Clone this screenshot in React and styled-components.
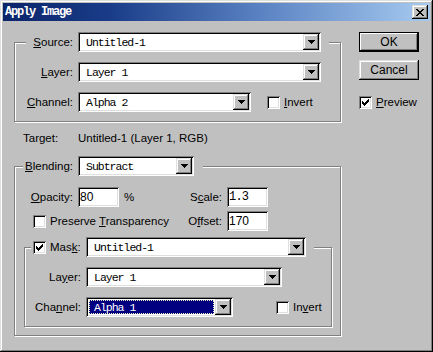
import React from "react";
import styled, { createGlobalStyle } from "styled-components";

const GlobalStyle = createGlobalStyle`
  html, body { margin: 0; padding: 0; background: #c0c0c0; }
  * { box-sizing: border-box; }
`;

const raised =
   "inset -1px -1px #000, inset 1px 1px #dfdfdf, inset -2px -2px #808080, inset 2px 2px #fff";
const sunken =
   "inset 1px 1px #808080, inset -1px -1px #fff, inset 2px 2px #000, inset -2px -2px #dfdfdf";

const Window = styled.div`
   width: 433px;
   height: 352px;
   padding: 3px;
   background: #c0c0c0;
   box-shadow: ${raised};
   font-family: "Liberation Sans", Arial, sans-serif;
   font-size: 11.5px;
   color: #000;
`;
const TitleBar = styled.div`
   height: 18px;
   display: flex;
   align-items: center;
   justify-content: space-between;
   padding: 0 2px;
   background: linear-gradient(90deg, #0a246a 0%, #1a3c88 25%, #5a82c2 60%, #a6caf0 100%);
`;
const Title = styled.span`
   color: #fff;
   font-family: "Liberation Mono", monospace;
   font-weight: bold;
   font-size: 12px;
   letter-spacing: -1.2px;
`;
const CloseButton = styled.div`
   width: 16px;
   height: 14px;
   background: #c0c0c0;
   box-shadow: ${raised};
   display: flex;
   align-items: center;
   justify-content: center;
`;
const Body = styled.div`
   display: flex;
   padding: 11px 0 0 11px;
`;
const LeftColumn = styled.div`
   width: 328px;
   display: flex;
   flex-direction: column;
`;
const RightColumn = styled.div`
   margin-left: 17px;
   width: 60px;
   display: flex;
   flex-direction: column;
`;
const Group = styled.fieldset`
   margin: ${(p) => p.$mt || 0}px ${(p) => p.$mr ?? 1}px 0 ${(p) => p.$ml || 0}px;
   padding: 0 0 ${(p) => p.$pb}px 0;
   min-width: 0;
   border: 1px solid #808080;
   box-shadow: inset 1px 1px #fff, 1px 1px #fff;
`;
const Legend = styled.legend`
   margin-left: ${(p) => p.$offset}px;
   padding: 0 ${(p) => p.$pr}px 0 ${(p) => p.$pl || 0}px;
   background: #c0c0c0;
`;
const LegendInner = styled.div`
   display: flex;
   align-items: center;
   height: 20px;
`;
const Row = styled.div`
   display: flex;
   align-items: center;
   height: 20px;
   margin-top: ${(p) => p.$mt ?? 10}px;
`;
const Cell = styled.div`
   display: flex;
   align-items: center;
   width: ${(p) => p.$w}px;
   flex-shrink: 0;
`;
const Label = styled.span`
   width: ${(p) => p.$w}px;
   flex-shrink: 0;
   margin-right: 5px;
   text-align: ${(p) => p.$align || "right"};
   white-space: nowrap;
   margin-left: ${(p) => p.$ml || 0}px;
   u { text-underline-offset: 1px; }
`;
const Text = styled.span`
   margin-left: ${(p) => p.$ml || 0}px;
   white-space: nowrap;
   u { text-underline-offset: 1px; }
`;
const Combo = styled.div`
   width: ${(p) => p.$w}px;
   height: 20px;
   flex-shrink: 0;
   display: flex;
   padding: 2px;
   background: #fff;
   box-shadow: ${sunken};
`;
const ComboText = styled.div`
   flex: 1;
   display: flex;
   align-items: center;
   margin: 1px;
   padding-left: 5px;
   font-family: "Liberation Mono", monospace;
   font-size: 11.5px;
   letter-spacing: -1px;
   background: ${(p) => (p.$selected ? "#000080" : "transparent")};
   color: ${(p) => (p.$selected ? "#fff" : "#000")};
   outline: ${(p) => (p.$selected ? "1px dotted #f0f0c0" : "none")};
   outline-offset: -1px;
`;
const DropButton = styled.div`
   width: 16px;
   height: 16px;
   flex-shrink: 0;
   background: #c0c0c0;
   box-shadow: ${raised};
   display: flex;
   align-items: center;
   justify-content: center;
`;
const Input = styled.div`
   width: 41px;
   height: 20px;
   flex-shrink: 0;
   display: flex;
   align-items: center;
   padding-left: 2px;
   background: #fff;
   box-shadow: ${sunken};
   font-family: ${(p) => (p.$mono ? '"Liberation Mono", monospace' : '"Liberation Sans", Arial, sans-serif')};
   font-size: 12px;
   letter-spacing: ${(p) => (p.$mono ? "-0.8px" : "0")};
`;
const Box = styled.span`
   width: 13px;
   height: 13px;
   flex-shrink: 0;
   margin-left: ${(p) => p.$ml || 0}px;
   background: #fff;
   box-shadow: ${sunken};
   display: flex;
   align-items: center;
   justify-content: center;
`;
const TargetRow = styled.div`
   display: flex;
   margin-top: 10px;
   line-height: 13px;
   height: 13px;
`;
const TargetLabel = styled.span`
   width: 64px;
   padding-left: 9px;
`;
const Button = styled.div`
   width: 60px;
   height: 20px;
   display: flex;
   align-items: center;
   justify-content: center;
   margin-bottom: 8px;
   background: #c0c0c0;
   font-size: 12px;
   border: ${(p) => (p.$default ? "1px solid #000" : "none")};
   box-shadow: ${(p) =>
      p.$default
         ? "inset -1px -1px #000, inset 1px 1px #fff, inset -2px -2px #808080"
         : raised};
`;
const PreviewRow = styled.div`
   display: flex;
   align-items: center;
   height: 20px;
   margin-top: 4px;
`;

const Arrow = () => (
   <svg width="7" height="4" shapeRendering="crispEdges">
      <rect x="0" y="0" width="7" height="1" fill="#000" />
      <rect x="1" y="1" width="5" height="1" fill="#000" />
      <rect x="2" y="2" width="3" height="1" fill="#000" />
      <rect x="3" y="3" width="1" height="1" fill="#000" />
   </svg>
);

const CloseX = () => (
   <svg width="8" height="7" shapeRendering="crispEdges">
      {[0, 1, 2, 3, 4, 5, 6].map((i) => (
         <g key={i}>
            <rect x={i} y={i} width="2" height="1" fill="#000" />
            <rect x={6 - i} y={i} width="2" height="1" fill="#000" />
         </g>
      ))}
   </svg>
);

const checkRows = [
   [6, 1],
   [5, 2],
   [0, 1, 4, 3],
   [0, 2, 3, 3],
   [0, 5],
   [1, 3],
   [2, 1],
];
const Tick = () => (
   <svg width="7" height="7" shapeRendering="crispEdges">
      {checkRows.map((r, y) => {
         const out = [];
         for (let k = 0; k < r.length; k += 2)
            out.push(<rect key={k} x={r[k]} y={y} width={r[k + 1]} height="1" fill="#000" />);
         return <g key={y}>{out}</g>;
      })}
   </svg>
);

const ComboBox = ({ w, value, selected }) => (
   <Combo $w={w}>
      <ComboText $selected={selected}>{value}</ComboText>
      <DropButton>
         <Arrow />
      </DropButton>
   </Combo>
);

const CheckBox = ({ checked, ml }) => <Box $ml={ml}>{checked && <Tick />}</Box>;

const App = () => {
   return (
      <>
         <GlobalStyle />
         <Window>
            <TitleBar>
               <Title>Apply Image</Title>
               <CloseButton>
                  <CloseX />
               </CloseButton>
            </TitleBar>
            <Body>
               <LeftColumn>
                  <Group $pb={9}>
                     <Legend $offset={11} $pr={8}>
                        <LegendInner>
                           <Label $w={47}>
                              <u>S</u>ource:
                           </Label>
                           <ComboBox w={243} value="Untitled-1" />
                        </LegendInner>
                     </Legend>
                     <Row>
                        <Label $w={58}>
                           <u>L</u>ayer:
                        </Label>
                        <ComboBox w={243} value="Layer 1" />
                     </Row>
                     <Row>
                        <Label $w={58}>
                           <u>C</u>hannel:
                        </Label>
                        <ComboBox w={173} value="Alpha 2" />
                        <CheckBox ml={16} />
                        <Text $ml={4}>
                           <u>I</u>nvert
                        </Text>
                     </Row>
                  </Group>

                  <TargetRow>
                     <TargetLabel>Target:</TargetLabel>
                     <span>Untitled-1 (Layer 1, RGB)</span>
                  </TargetRow>

                  <Group $mt={11} $pb={8}>
                     <Legend $offset={8} $pr={9}>
                        <LegendInner>
                           <Label $w={50}>
                              <u>B</u>lending:
                           </Label>
                           <ComboBox w={116} value="Subtract" />
                        </LegendInner>
                     </Legend>
                     <Row $mt={11}>
                        <Cell $w={160}>
                           <Label $w={58}>
                              <u>O</u>pacity:
                           </Label>
                           <Input>80</Input>
                           <Text $ml={5}>%</Text>
                        </Cell>
                        <Label $w={47}>
                           S<u>c</u>ale:
                        </Label>
                        <Input $mono>1.3</Input>
                     </Row>
                     <Row $mt={4}>
                        <Cell $w={160}>
                           <CheckBox ml={18} />
                           <Text $ml={4}>
                              Preserve <u>T</u>ransparency
                           </Text>
                        </Cell>
                        <Label $w={47}>
                           O<u>f</u>fset:
                        </Label>
                        <Input>170</Input>
                     </Row>

                     <Group $mt={6} $ml={9} $mr={8} $pb={9}>
                        <Legend $offset={6} $pl={2} $pr={8}>
                           <LegendInner>
                              <CheckBox checked />
                              <Label $w={31} $ml={4} $align="left">
                                 Mas<u>k</u>:
                              </Label>
                              <ComboBox w={220} value="Untitled-1" />
                           </LegendInner>
                        </Legend>
                        <Row>
                           <Label $w={56}>
                              La<u>y</u>er:
                           </Label>
                           <ComboBox w={196} value="Layer 1" />
                        </Row>
                        <Row>
                           <Label $w={56}>
                              Cha<u>n</u>nel:
                           </Label>
                           <ComboBox w={147} value="Alpha 1" selected />
                           <CheckBox ml={43} />
                           <Text $ml={4}>
                              In<u>v</u>ert
                           </Text>
                        </Row>
                     </Group>
                  </Group>
               </LeftColumn>

               <RightColumn>
                  <Button $default>OK</Button>
                  <Button>Cancel</Button>
                  <PreviewRow>
                     <CheckBox checked />
                     <Text $ml={4}>
                        <u>P</u>review
                     </Text>
                  </PreviewRow>
               </RightColumn>
            </Body>
         </Window>
      </>
   );
};

export default App;
